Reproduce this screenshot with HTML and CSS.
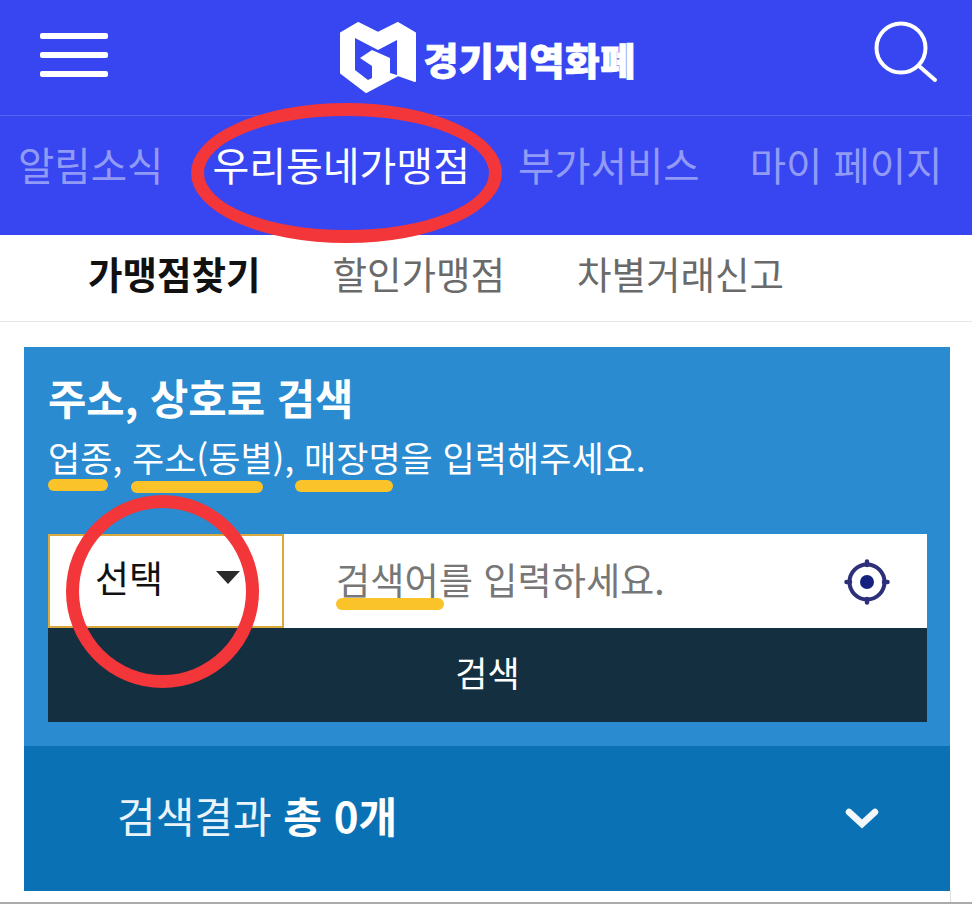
FILE: index.html
```html
<!DOCTYPE html>
<html lang="ko">
<head>
<meta charset="utf-8">
<title>경기지역화폐</title>
<link rel="stylesheet" href="styles.css">
</head>
<body>
<div class="page">
  <header class="topbar">
    <div class="burger"><span></span><span></span><span></span></div>
    <div class="brand">
      <svg class="brand-mark" viewBox="6 8 78 73" width="78" height="73">
        <path fill="#fff" stroke="#fff" stroke-width="2" stroke-linejoin="round" d="M8 20 L25 10 L45 20 L65 10 L82 20 L82 68 L65 62 L33 79 L8 60 Z"/>
        <path fill="#3746f0" d="M22 25 L45 37 L64 27 L64 62 L57 60 L57 45 L39 37 L27 45 L39 53 L39 65 L35 67 L22 57 Z"/>
      </svg>
      <span class="brand-name">경기지역화폐</span>
    </div>
    <svg class="search-icon" viewBox="0 0 64 62" width="64" height="62">
      <circle cx="27" cy="27" r="24.5" fill="none" stroke="#fff" stroke-width="4"/>
      <path d="M45 45 L61 59" fill="none" stroke="#fff" stroke-width="4" stroke-linecap="round"/>
    </svg>
  </header>
  <nav class="mainnav">
    <a class="n1">알림소식</a>
    <a class="n2 on">우리동네가맹점</a>
    <a class="n3">부가서비스</a>
    <a class="n4">마이 페이지</a>
  </nav>
  <nav class="subnav">
    <a class="on">가맹점찾기</a>
    <a>할인가맹점</a>
    <a>차별거래신고</a>
  </nav>
  <main class="content">
    <section class="panel">
      <div class="search-area">
        <h2 class="title">주소, 상호로 검색</h2>
        <p class="hint">업종, 주소(동별), 매장명을 입력해주세요.</p>
        <div class="field-row">
          <div class="select"><span>선택</span><i class="caret"></i></div>
          <div class="input">
            <span class="placeholder">검색어를 입력하세요.</span>
            <svg class="target" viewBox="0 0 46 46" width="46" height="46">
              <circle cx="23" cy="23" r="17.5" fill="#fff" stroke="#2d2f78" stroke-width="4"/>
              <circle cx="23" cy="23" r="7" fill="#14217e"/>
              <path d="M23 2.500V6M23 40V43.500M2.500 23H6M40 23H43.500" stroke="#2d2f78" stroke-width="4.500" stroke-linecap="round"/>
            </svg>
          </div>
        </div>
        <button class="submit">검색</button>
      </div>
      <div class="result">
        <span class="result-text">검색결과 <b>총 0개</b></span>
        <svg class="chev" viewBox="0 0 36 24" width="36" height="24"><path d="M5 5 L18 17 L31 5" fill="none" stroke="#f2f7fb" stroke-width="6.500" stroke-linecap="round" stroke-linejoin="miter"/></svg>
      </div>
    </section>
  </main>
  <div class="footer-line"></div>
  <i class="mark mark-a"></i><i class="mark mark-b"></i><i class="mark mark-c"></i><i class="mark mark-d"></i>
  <i class="ring ring-a"></i><i class="ring ring-b"></i>
</div>
</body>
</html>
```
FILE: styles.css
```css
* { box-sizing: border-box; }
html, body { margin: 0; padding: 0; background: #fff; }
body { font-family: "Noto Sans CJK KR", "Noto Sans", sans-serif; }
.page { position: relative; width: 972px; height: 904px; overflow: hidden; }

.topbar { height: 116px; background: #3746f0; border-bottom: 1px solid #5563f3; display: flex; align-items: center; justify-content: space-between; padding: 0 34px 0 40px; position: relative; }
.burger { width: 68px; display: flex; flex-direction: column; gap: 13px; margin-top: -5px; }
.burger span { height: 6px; background: #fff; border-radius: 2px; display: block; }
.brand { display: flex; align-items: center; gap: 6px; margin-left: -7px; }
.brand-mark { display: block; }
.brand-name { font-size: 38px; font-weight: 900; color: #fff; letter-spacing: 0.4px; line-height: 44px; -webkit-text-stroke: 0.8px #fff; margin-top: 2px; }
.search-icon { display: block; margin-top: -11px; }

.mainnav { height: 119px; background: #3746f0; display: flex; align-items: center; padding: 0 0 24px 18px; font-size: 39.5px; line-height: 50px; color: #919bf6; white-space: nowrap; }
.mainnav .n2 { margin-left: 49px; font-size: 40px; }
.mainnav .n3 { margin-left: 48px; }
.mainnav .n4 { margin-left: 50px; }
.mainnav .on { color: #fff; }

.subnav { height: 87px; background: #fff; border-bottom: 1px solid #e6e6e6; display: flex; align-items: center; padding: 0 0 10px 88px; gap: 72px; font-size: 37.5px; line-height: 48px; color: #6a6a6a; white-space: nowrap; }
.subnav .on { color: #111; font-weight: 700; }

.content { padding: 25px 22px 0 24px; }
.panel { background: #2a8bd0; }
.search-area { padding: 21px 23px 24px 24px; height: 399px; }
.title { margin: 0; font-size: 41.7px; line-height: 58px; font-weight: 700; color: #fff; }
.hint { margin: 6px 0 0; font-size: 35px; line-height: 50px; color: #fff; white-space: nowrap; }
.field-row { display: flex; height: 94px; margin-top: 52px; }
.select { width: 236px; height: 94px; background: #fff; border: 2px solid #d9a93d; display: flex; align-items: center; justify-content: space-between; padding: 0 42px 0 45px; font-size: 37px; color: #111; }
.select span { margin-top: -8px; }
.caret { width: 0; height: 0; border-left: 12px solid transparent; border-right: 12px solid transparent; border-top: 13px solid #2b2b2b; margin-top: -7px; }
.input { flex: 1; background: #fff; display: flex; align-items: center; justify-content: space-between; padding: 0 37px 0 52px; }
.placeholder { font-size: 37.2px; color: #777; margin-top: -4px; }
.target { display: block; margin-top: 1px; }
.submit { display: block; width: 100%; height: 94px; border: 0; padding: 0 0 8px; background: #142f3f; color: #fff; font: inherit; font-size: 35px; }
.result { height: 145px; background: #0a72b4; display: flex; align-items: center; justify-content: space-between; padding: 0 70px 0 93px; }
.result-text { font-size: 42px; color: #eaf3fa; margin-top: -8px; }
.result-text b { font-weight: 700; color: #fff; }
.chev { display: block; margin-top: 1px; }

.footer-line { position: absolute; left: 24px; right: 21px; top: 891px; height: 12px; border-right: 1px solid #ddd; }
.footer-line::after { content: ""; position: fixed; left: 0; width: 972px; top: 902px; height: 2px; background: #aaa; }

.mark { position: absolute; height: 12px; background: #fbc32a; border-radius: 6px; }
.mark-a { left: 48px; top: 479px; width: 60px; }
.mark-b { left: 131px; top: 481px; width: 132px; }
.mark-c { left: 295px; top: 480px; width: 98px; }
.mark-d { left: 336px; top: 598px; width: 108px; }

.ring { position: absolute; border: 13px solid #f23639; border-radius: 50%; }
.ring-a { left: 191px; top: 103px; width: 311px; height: 140px; }
.ring-b { left: 66px; top: 495px; width: 193px; height: 193px; }
```
